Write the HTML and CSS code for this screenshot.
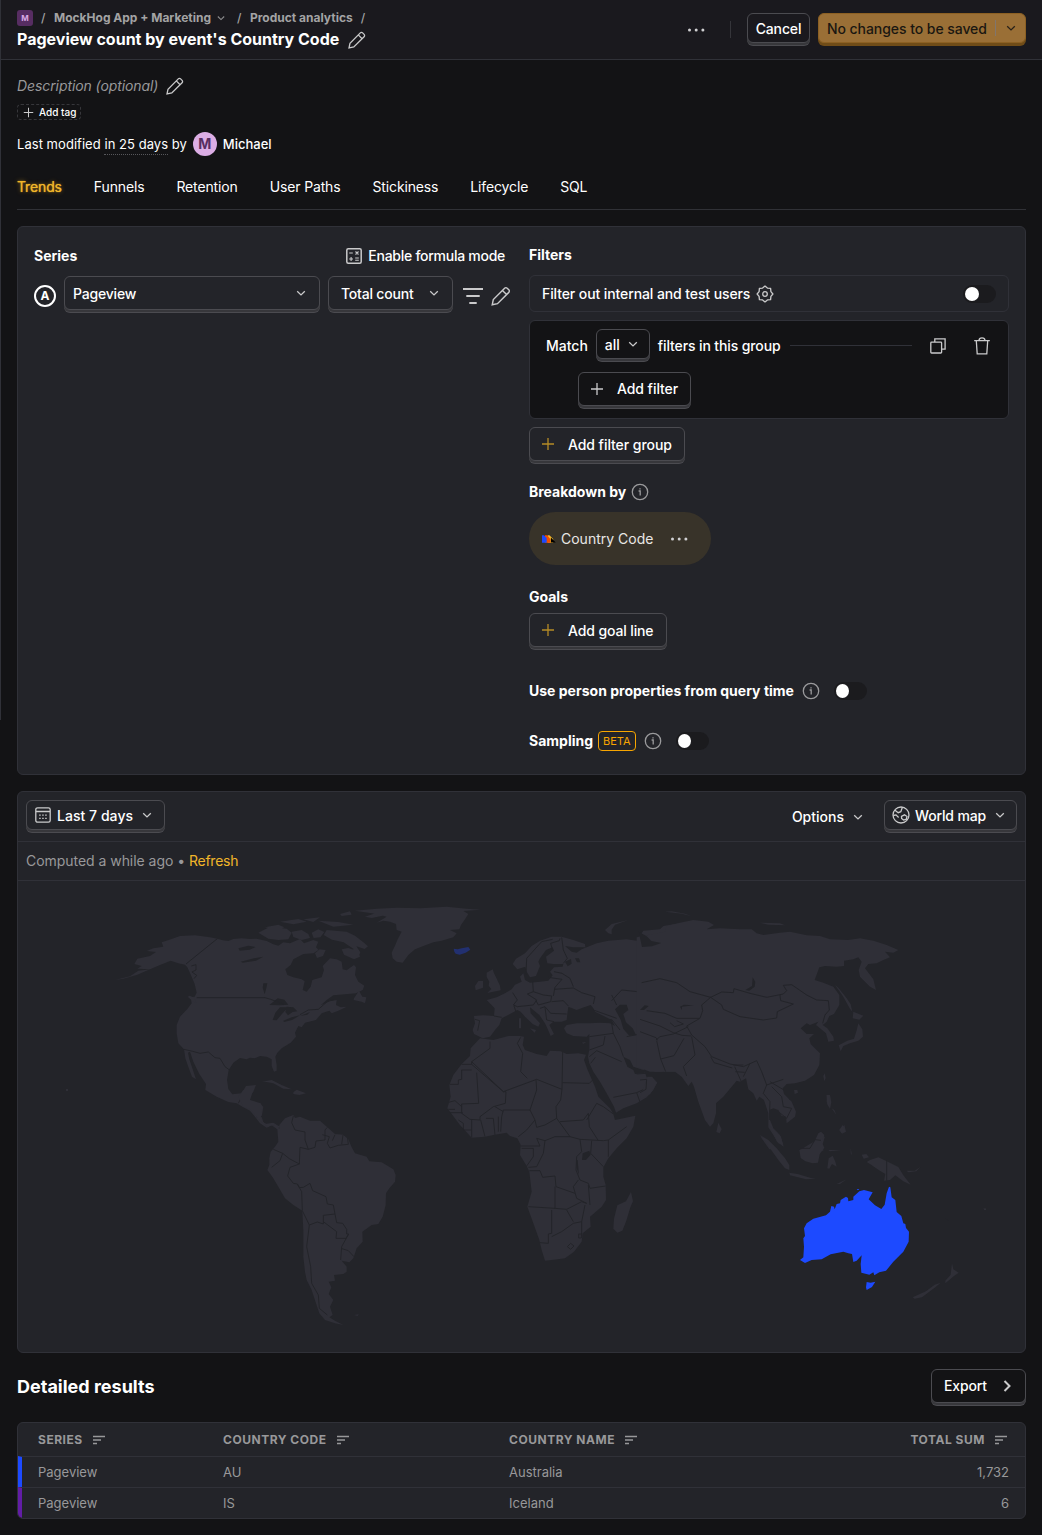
FILE: index.html
```html
<!DOCTYPE html>
<html lang="en">
<head>
<meta charset="utf-8">
<title>Pageview count by event's Country Code</title>
<link rel="stylesheet" href="styles.css">
</head>
<body>
<svg class="defs" width="0" height="0">
  <symbol id="pencil" viewBox="0 0 20 20"><path d="M2 18l1-4.800L13.300 2.900a1.600 1.600 0 0 1 2.300 0l1.500 1.500a1.600 1.600 0 0 1 0 2.300L6.800 17 2 18zM11.300 4.900l3.800 3.800"/></symbol>
  <symbol id="chev" viewBox="0 0 12 12"><path d="M2.200 4.200L6 7.900l3.800-3.700"/></symbol>
  <symbol id="plus" viewBox="0 0 14 14"><path d="M7 1v12M1 7h12"/></symbol>
  <symbol id="info" viewBox="0 0 18 18"><circle cx="9" cy="9" r="7.700"/><path d="M7.600 8h1.600v4.500M9 5.200v1.300"/></symbol>
  <symbol id="dots" viewBox="0 0 20 6"><circle cx="3.500" cy="3" r="1.500"/><circle cx="10.200" cy="3" r="1.500"/><circle cx="16.900" cy="3" r="1.500"/></symbol>
  <symbol id="sort" viewBox="0 0 14 10"><path d="M1 1.500h12M1 5h8M1 8.500h4"/></symbol>
</svg>

<header class="top">
  <div class="top-left">
    <nav class="crumbs">
      <span class="org">M</span><span class="sl s1">/</span><span>MockHog App + Marketing</span><svg class="ic crumb-chev"><use href="#chev"/></svg><span class="sl s2">/</span><span>Product analytics</span><span class="sl s3">/</span>
    </nav>
    <div class="title-row"><h1>Pageview count by event's Country Code</h1><svg class="ic pencil"><use href="#pencil"/></svg></div>
  </div>
  <div class="top-actions">
    <svg class="dots"><use href="#dots"/></svg>
    <i class="vline"></i>
    <button class="btn small cancel"><span>Cancel</span></button>
    <button class="btn small save"><span>No changes to be saved</span><i></i><svg class="ic chev"><use href="#chev"/></svg></button>
  </div>
</header>

<main>
  <div class="desc"><em>Description (optional)</em><svg class="ic pencil"><use href="#pencil"/></svg></div>
  <div class="tag"><svg class="ic"><use href="#plus"/></svg><span>Add tag</span></div>
  <div class="modified"><span>Last modified <u>in 25 days</u> by</span><b>M</b><strong>Michael</strong></div>
  <nav class="tabs"><a class="on">Trends</a><a>Funnels</a><a>Retention</a><a>User Paths</a><a>Stickiness</a><a>Lifecycle</a><a>SQL</a></nav>

  <section class="card editor">
    <div class="series">
      <div class="series-head">
        <h4>Series</h4>
        <div class="formula">
          <svg class="ic" viewBox="0 0 16 16"><rect x=".8" y=".8" width="14.400" height="14.400" rx="1.500" stroke-width="1.500"/><path d="M3.200 5h3.600M9.500 3.500l3 3M12.500 3.500l-3 3M3.200 11h3.800M5.100 9.100v3.800M9.200 10h3.600M9.200 12.300h3.600"/></svg>
          <span>Enable formula mode</span>
        </div>
      </div>
      <div class="series-row">
        <span class="letter">A</span>
        <button class="btn event"><span>Pageview</span><svg class="ic chev"><use href="#chev"/></svg></button>
        <button class="btn math"><span>Total count</span><svg class="ic chev"><use href="#chev"/></svg></button>
        <svg class="ic funnel" viewBox="0 0 20 16"><path d="M0 1h20M3.300 8h13.400M6.300 15h7.400"/></svg>
        <svg class="ic pencil big"><use href="#pencil"/></svg>
      </div>
    </div>
    <div class="filters">
      <h4 class="h-filters">Filters</h4>
      <div class="internal">
        <span>Filter out internal and test users</span>
        <svg class="ic gear" viewBox="0 0 18 18"><path d="M16.900 9L14.900 11.400 14.600 14.600 11.400 14.900 9 16.900 6.600 14.900 3.400 14.600 3.100 11.400 1.100 9 3.100 6.600 3.400 3.400 6.600 3.100 9 1.100 11.400 3.100 14.600 3.400 14.900 6.600z" stroke-linejoin="round"/><circle cx="9" cy="9" r="2.300"/></svg>
        <i class="switch"></i>
      </div>
      <div class="group">
        <div class="match">
          <span>Match</span>
          <button class="btn small all"><span>all</span><svg class="ic chev"><use href="#chev"/></svg></button>
          <span class="tight">filters in this group</span>
          <hr>
          <svg class="ic copy" viewBox="0 0 16 16"><rect x=".8" y="4.200" width="10.800" height="10.800" rx=".8"/><path d="M4.800 4V.9h10.300v10.300h-3.300"/></svg>
          <svg class="ic trash" viewBox="0 0 16 18"><path d="M.2 3.600h15.600M2.300 3.800l.9 13h9.600l.9-13M5 3.400C5.200 0 10.800 0 11 3.400"/></svg>
        </div>
        <button class="btn add-filter"><svg class="ic plus"><use href="#plus"/></svg><span>Add filter</span></button>
      </div>
      <button class="btn add-group"><svg class="ic plus gold"><use href="#plus"/></svg><span>Add filter group</span></button>
      <div class="label-row breakdown"><h4>Breakdown by</h4><svg class="ic info"><use href="#info"/></svg></div>
      <div class="pill">
        <svg class="hog" viewBox="0 0 15 8"><path fill="#f9bd2b" d="M6 0h2l4 4v4H6z"/><path fill="#f54e00" d="M3 0h2.500L9 4v4H3z"/><path fill="#1d4aff" d="M0 0h2l3 3v5H0z"/><path fill="#000" d="M9.500 2.500l5.200 5.200H9.500z"/></svg>
        <span>Country Code</span>
        <svg class="dots"><use href="#dots"/></svg>
      </div>
      <h4 class="h-goals">Goals</h4>
      <button class="btn add-goal"><svg class="ic plus gold"><use href="#plus"/></svg><span>Add goal line</span></button>
      <div class="label-row person"><h4>Use person properties from query time</h4><svg class="ic info"><use href="#info"/></svg><i class="switch"></i></div>
      <div class="label-row sampling"><h4>Sampling</h4><span class="beta">BETA</span><svg class="ic info"><use href="#info"/></svg><i class="switch"></i></div>
    </div>
  </section>

  <section class="card insight">
    <div class="toolbar">
      <button class="btn small range">
        <svg class="ic" viewBox="0 0 16 16"><rect x=".8" y=".8" width="14.400" height="14.400" rx="1.800"/><path d="M1 4.500h14"/><path stroke-dasharray="1.500 1.500" d="M4.200 8.200h8M4.200 11.400h8"/></svg>
        <span>Last 7 days</span><svg class="ic chev"><use href="#chev"/></svg>
      </button>
      <div class="options"><span>Options</span><svg class="ic chev"><use href="#chev"/></svg></div>
      <button class="btn small world">
        <svg class="ic" viewBox="0 0 18 18"><circle cx="9" cy="9" r="8"/><path d="M3 4.300l3.200 2.400 2.600-1L10.300 1.500M1.300 9.500l2.700-.6 2.600 2.600M9.500 10.300l3-1.500 2.500 1.700-.6 2.700-2.800.9-2-1.600z"/></svg>
        <span>World map</span><svg class="ic chev"><use href="#chev"/></svg>
      </button>
    </div>
    <div class="computed">Computed a while ago • <a>Refresh</a></div>
    <svg class="map" viewBox="18 881 1007 471">
      <!-- North America and Greenland -->
      <g transform="translate(100 890) scale(.33333)">
        <path class="land" d="M185 157L215 147 240 138 285 136 330 142 352 146 368 151 385 153 400 147 425 145 450 147 470 146 500 153 520 163 535 167 550 157 570 160 600 147 612 160 640 150 655 155 648 172 656 180 640 190 610 192 580 208 572 225 556 238 562 255 580 262 605 268 614 274 608 300 620 305 632 290 637 270 665 262 672 240 668 228 690 205 710 208 725 215 728 238 740 241 762 225 768 232 765 255 775 275 793 287 788 300 768 310 735 313 700 316 680 330 662 346 690 334 710 330 708 345 722 352 740 350 715 362 695 370 688 362 665 370 648 390 615 398 605 412 595 408 585 428 588 440 572 458 545 475 532 488 526 500 530 525 530 542 522 545 515 528 515 508 500 500 480 498 465 505 450 503 440 508 420 504 400 518 386 540 381 570 385 597 397 613 425 610 438 588 468 585 460 605 448 620 442 640 478 640 490 650 485 680 490 697 507 706 522 700 540 710 532 718 515 706 500 713 480 700 465 680 450 662 430 652 410 640 385 636 350 620 316 600 318 582 298 552 280 515 270 485 264 488 268 508 288 568 276 560 264 528 256 505 252 478 235 460 230 430 230 405 240 380 262 357 275 340 272 322 284 320 290 308 284 282 274 258 262 232 255 224 235 220 212 212 180 225 150 238 112 236 125 228 103 222 112 206 150 198 168 186 140 183 160 175 190 170z"/>
        <path class="land" d="M115 242L150 238 112 254 70 266 45 270 90 259zM285 290l-8-12M263 320l18 16 8 3-6-16-14-6zM475 128L510 110 560 116 575 128 565 148 535 150 505 146zM495 112l40-8 18 8-20 8zM575 125l30-5 20 12 5 12-25 6-25-9zM635 128l20-10 18 8-12 16-20 2zM655 92l60 4 45 8-60 6zM680 120l60 5 25 12 25 20 14 12-10 8-25-8 12 18-5 12-35 0 20-22-30-20-35-8-25-14zM720 72l30-8 5 10-30 4zM540 95l55-8 25 8-40 8zM610 88l50-6-20 14zM725 178l20-4 30 10 5 16-18 8-30-14zM645 190l14-12 18 2-8 18-18 6zM762 325l15-23 10 18 12 2-4 18-10-5-24-5z"/>
        <path class="land" d="M765 62L830 56 890 53 960 55 1040 50 1100 56 1142 59 1090 63 1105 72 1095 88 1083 105 1078 118 1050 120 1070 130 1060 142 1025 152 1000 157 970 168 945 178 925 195 908 218 890 215 878 205 875 188 886 165 892 150 905 125 890 120 888 102 870 95 850 92 830 98 860 80 830 72zM795 80l35-12 25 8-40 8z"/>
        <path class="land" d="M485 575L515 570 545 585 575 598 550 596 520 580 495 575zM580 607l10-8 28 11-20 5-18-3zM540 613l15 1zM627 612l10 1z"/>
        <path class="sea" d="M415 175l30-8 22 4-18 8-30 3zM422 215l40-10 28-5-22 12-40 6zM490 280h12l-3 15-5 18-6-20zM508 345l25-20 20 4 12 15-25 2zM518 390l8-22 14-16 24 0-20 22-14 17zM560 350l20 2 12 12-14 2-14 10-8-10zM550 392l25-10 25-6-24 14-24 6zM600 378l30-12-8 8z"/>
        <path class="border" d="M352 146L258 222M274 228l14-4v16l-12 6 14 10-8 10M290 323H495L512 328 550 342M600 374L625 360 655 358 685 332 700 330M252 478L278 484 300 490 325 486 345 503 360 505 375 530 390 541M415 640l6-12 20-12 6 12-8 18M430 640l25 18 25-15M470 680h16"/>
        <path class="iceland" d="M1061 176l12 2 12-3 20-4 6 8-14 9-18 6-12-3-4-6z"/>
      </g>
      <!-- South America -->
      <g transform="translate(240 1090) scale(.33333)">
        <path class="land" d="M-5 20L10 0 40 0 30 30 62 40 67 50 62 85 75 102 100 98 112 108 118 118 118 105 135 85 160 75 165 84 180 80 210 92 240 92 262 112 285 132 310 134 325 148 335 172 345 190 380 200 388 214 425 217 460 238 467 255 465 275 448 295 438 310 437 345 428 380 415 402 395 405 367 425 368 455 350 475 340 505 328 517 305 512 320 530 320 545 310 552 282 555 285 572 266 575 274 592 266 612 280 630 270 650 278 675 268 682 285 692 310 705 285 700 255 690 238 670 228 640 215 600 200 570 195 545 190 500 190 420 187 362 160 345 135 325 115 290 98 262 82 240 88 225 88 205 92 185 105 170 115 155 112 118 100 105 82 110 60 92 45 75 30 58 10 50z"/>
        <path class="land" d="M342 675l14-2-3 5z"/>
        <path class="border" d="M160 78L155 98 165 120 195 126 195 150 205 178 225 172 228 153 255 150 255 120 262 112M247 134L268 140 262 160 270 174 295 166 325 163 322 140 310 134M277 152L285 134M305 163l4-28M205 178L180 172 178 222 148 206 128 190 100 178M128 190L120 212 95 232M178 222L150 232 143 258 160 280 172 282 178 293 190 292 210 280 218 302 258 320 262 342 280 345 285 372M172 282L185 305 187 362 208 405 232 396 250 402 250 376 285 372 290 398 308 400 320 418 320 432 326 432 305 470 302 510M250 395L290 425 288 445 318 445 326 432M303 475L325 482 342 500M208 405L200 470 212 530 215 580 235 615 238 655 262 675"/>
      </g>
      <!-- Europe, Africa and the Middle East -->
      <g transform="translate(430 890) scale(.33333)">
        <path class="land" d="M248 222L258 206 285 190 305 168 330 152 365 140 395 140 430 150 465 162 466 172 430 172 405 168 425 185 440 188 455 178 500 160 535 152 590 148 620 152 640 122 690 118 700 108 760 98V560L740 545 700 545 675 546 650 530 640 540 610 530 600 510 580 500 592 530 610 540 615 552 645 548 650 562 680 578 670 600 650 622 620 640 580 655 558 668 552 650 530 610 510 575 490 545 478 520 474 500 478 478 478 455 478 432 470 440 430 438 410 430 402 415 410 405 440 400 480 400 510 398 540 400 555 408 545 390 515 375 495 365 490 355 482 345 462 352 440 360 415 350 412 372 410 390 395 395 380 395 370 395 358 405 372 432 362 438 352 415 345 400 328 375 300 352 302 370 330 400 325 410 308 402 285 380 272 365 262 360 240 372 215 385 208 405 195 420 180 440 158 445 132 432 128 420 135 400 132 378 160 376 192 378 194 355 170 330 200 322 225 310 245 298 255 284 275 275 270 260 280 250 285 270 300 278 330 275 355 272 368 256 360 245 372 232 398 230 400 222 370 222 352 220 348 200 372 182 368 172 348 180 330 205 325 215 330 228 318 258 300 262 290 245 286 230 262 238z"/>
        <path class="land" d="M170 248l18-10 4 12 6 12 12 25 2 14-40 8 12-12-8-10 2-12-8-14zM135 288l10-15 14 0 0 20-22 8zM535 130l-10-10 20-18 50-12-40 14-10 15 0 14zM705 66l40 4zM267 385h6v30h-6zM300 415l18 5-4 8zM370 455l26 0M455 458l14-3-8 6z"/>
        <path class="land" d="M150 445L190 450 235 438 268 438 282 440 278 465 285 480 320 492 350 498 360 482 392 484 410 492 445 490 468 494 462 510 472 538 495 590 505 620 540 655 550 672 555 690 616 677 610 710 590 745 560 775 535 805 520 832 520 860 527 885 528 930 515 950 480 980 482 1010 458 1030 455 1055 432 1085 405 1105 365 1110 345 1112 335 1080 328 1050 310 1000 292 950 305 905 298 845 290 828 270 795 272 765 262 745 240 738 230 728 190 735 165 740 125 743 90 705 65 672 52 655 62 620 58 585 70 555 95 522 120 498 122 475z"/>
        <path class="land" d="M603 906l6 28-8 18-12 40-12 30-15 6-12-12 2-30 10-40 26-12z"/>
        <path class="sea" d="M555 358l15-14 20 0 5 16-15 12 8 25 20 18 10 20-20 2-18-20-8-28zM635 362l12-12 10 4-12 14zM458 790l20-8 4 12-14 16-12 0zM405 215l18-8 2 14-12 8zM435 205l12 0 4 12-10 0zM650 135l20 10 0 22-14-10zM438 810h5l4 45-7-20z"/>
        <path class="border" d="M288 255L290 205 335 155 368 148M368 182L362 160 388 152 390 145M395 142L400 180 412 205 400 220M372 245L396 250 420 265 430 290M355 262L396 268 375 292 370 318M372 298L430 294 455 308 495 320 490 342M248 308L262 330 250 345 262 350 310 345 320 330 292 312 310 305 308 275M310 305L340 315 365 318 362 335 325 345 318 332M365 335L400 332 415 348M330 355L345 350 362 370 410 372M345 352L350 390 372 395M252 348L258 365M192 378L215 382M135 388l14 4-6 30M490 360L560 385M520 395L545 388 570 420M545 400L550 430 478 440M545 332L575 300 632 306 640 278 695 265 720 275 760 280M545 315L560 345M590 440L650 428 680 450 745 430M622 365L640 360 690 385 750 390M625 370v25l75 30 50 15M550 430L570 470 580 500M678 450L690 490 705 520 700 545M705 508L750 508M478 480L520 465 525 438M478 500L500 482 575 515M482 520l14-18M550 622L620 608 648 595 650 570M620 608l10 28M620 552l28-2"/>
        <path class="border" d="M180 455V475L125 515 220 605 320 568 396 598 398 486M398 578L478 580 490 568M272 442L262 460 278 490 272 545 292 565M95 523H125V515M60 583L85 583 85 570 95 568 95 540 125 540M125 523L220 605 228 605 226 640 190 650 150 680 150 690 120 688 95 670 95 642 146 640 140 548M52 638L75 632 95 650M55 658H75M60 668L98 668M85 690l15 10 0 20 25 0M125 688L125 742M152 690L165 740M168 685H190L195 735M205 680V725M212 725L215 680 220 660 300 660 320 600 318 568M195 650L220 665M300 660L315 690 290 720 265 740M315 690L320 712 345 705 380 685 378 650 392 630 396 598M380 685L420 740 450 748 520 752 535 750 590 710M390 695L460 690 475 670 478 710 505 752M470 690L500 640 520 650 550 672M272 768H330L320 745 345 752 375 740 420 740M275 775h35v25l-20 28M345 752L340 790 320 830 295 832M298 842H330L338 862 375 858 378 890 435 910M450 748L455 785 440 800 438 840 450 870 475 880 480 895 527 888M482 790L520 830M485 752L482 790M535 750V800M295 950L375 955 375 890M375 955L410 958 455 935 470 940 440 925 430 890 445 870M475 885L480 945M365 960V1030L355 1032 355 1060 330 1058M365 1040L395 1025 430 1000 455 995 455 1040M410 960L430 995M465 945L455 995M412 1070l10-10 10 8-10 10zM446 1032l8 0 0 12-8 0z"/>
      </g>
      <!-- Asia -->
      <g transform="translate(640 890) scale(.33333)">
        <path class="land" d="M-10 142L40 132 75 125 80 108 120 98 160 90 205 95 222 105 200 118 240 115 300 118 335 118 350 130 370 135 420 128 450 125 500 136 540 138 570 148 625 150 660 145 700 152 740 165 775 180 760 188 735 185 750 202 730 210 710 220 685 222 675 235 700 268 708 300 690 290 660 260 656 240 665 215 655 202 640 208 612 212 612 228 590 230 555 228 538 232 524 270 550 278 580 290 598 315 598 345 582 372 568 378 560 395 548 405 562 415 580 440 582 452 565 455 558 430 540 415 528 405 535 395 510 405 500 400 482 415 500 432 522 432 508 445 512 462 530 480 540 490 538 525 522 555 495 572 465 580 440 582 428 595 432 612 455 635 468 665 465 680 440 700 438 680 425 678 415 660 400 655 388 660 390 690 400 715 420 735 430 765 415 760 400 735 385 712 385 670 372 630 358 620 350 632 340 610 325 598 318 565 300 575 290 572 275 590 250 620 228 640 228 670 220 700 210 710 195 690 175 635 162 590 155 575 145 588 125 560 105 545 60 545 30 545 -10 530z"/>
        <path class="land" d="M585 285l10 8 25 32 12 18 5 22-8-10-20-36zM640 365l30 12-12 12-20-4zM655 400l12 18 2 22-14 12-25 8-20 8-8 16-6-18 26-14 20-6 8-25zM550 558l4-8 3 14-4 10zM560 615l10 0 4 22-4 20-8-16zM598 720l15-15 5 20-12 6zM580 670l6 14M590 690l15 0M235 698l10 20-6 12-10-4zM462 600l10 0 2 8-10 4zM360 738l22 16 26 24-20 0zM480 780l50-30 16-20 8 12-6 20 2 20zM75 65l50 6 30 8-20-8-40-7zM360 98l60 2 15 6-50-2zM0 628l30-15 22-35-16-18-14 0z"/>
        <path class="sea" d="M338 262l8 14-2 14-16 12-12-2 20-12zM120 350l12-6 30 2-36 4 0 10zM0 360l14-14 12 2-14 12zM-4 125l24 14 14 14 30 6-28 10-30 2z"/>
        <path class="border" d="M5 278L60 266 110 278 150 305 212 322 245 306 280 308 282 296 330 310 380 322 430 312 440 302 430 286 455 284 500 315 530 330 565 332 568 360 555 375 548 400M212 322L245 345 250 358 300 380 370 390 410 384 412 365 460 342 422 332 420 315M212 322L185 345 188 362 180 385 110 385 75 370 20 362M180 385L140 408 155 435 195 470 215 500 270 522 310 530 350 512 365 545 380 585 430 568M48 450L60 440 100 432 145 410M0 388l60 20 40 20 26 8 28 2M50 452l12 55 40-10 30-52M62 507l15 38M155 440l10 55-35 35 10 28M0 425l48 18 5 8M90 398l14 12 26-8-20-10M212 500l10 18 55 16M280 525l30 0M284 530l20 45M286 545l28 2M310 560l20-40M380 585L370 610 390 635 388 690M395 590L425 620 430 650 455 655 440 685 415 665M390 575l50 30 10 25M0 570l20-2-2 30-18 10"/>
      </g>
      <!-- South-east Asia and Oceania -->
      <g transform="translate(690 1080) scale(.33333)">
        <path class="land" d="M210 165L235 180 260 205 285 235 298 255 298 270 285 265 265 240 240 205zM235 135l18 15 20 20 8 30-20-15-14-30zM298 278l25 4 40 12 15 2-30 2-48-12zM328 210l18-5 25-15 14-30 8-5 10 10-8 20 8 18-14 20-5 25-16 2-22-6-14-10zM412 265l4-30 12-8 8 18 4 15-14-8-8 14zM415 210l40 0-35 4zM440 312l30-14-20 14zM412 310l-14-6zM482 204l4 22-4-6zM515 224l14-2 8 10-16 4zM540 240l25-8 30 14 30 15 15 25 22 28-22-10-24-18-16 14-18 2 4-20-20-12-26-18-10-6zM650 272l25 0 16-12-12 14-24 3zM765 412l14 16-12-14zM786 550l4 18 16 10-14 10-26 22 0-8 16-18zM752 608l-16 14-40 30-22 4-6-4 40-18 26-20zM878 386l8-2 2 3zM410 45l8 0 2 25-5 10-5-15zM425 85l8 5 6 15M437 105l10 5M448 150l10-15 8 20-10 5z"/>
        <path class="border" d="M590 243V302M332 205l28 0 15-26 18 2"/>
        <path class="hot" d="M330 540L340 532 342 500 340 475 345 468 342 445 350 430 370 416 408 406 420 395 424 378 432 380 434 388 440 372 450 370 452 360 468 350 474 354 475 364 490 360 490 350 508 334 522 330 548 337 536 358 555 376 574 387 584 374 590 340 597 320 601 322 605 352 616 360 620 396 634 408 640 430 646 432 648 444 657 455 656 485 640 515 610 545 588 572 568 577 553 586 550 577 538 584 514 578 512 552 515 526 500 542 490 546 486 522 475 520 460 515 422 523 395 538 365 540 345 549zM530 606l12 2 14-3-10 16-16 9-2-8zM500 327l8 0-4 4z"/>
      </g>
      <path class="land" d="M66 1089h2v2h-2zM984 1209h2v1h-2z"/>
    </svg>
  </section>

  <div class="results-head"><h2>Detailed results</h2><button class="btn export"><span>Export</span><svg class="ic" viewBox="0 0 12 14"><path d="M3.500 2l5 5-5 5"/></svg></button></div>

  <section class="card table">
    <div class="row head"><span>SERIES<svg class="ic sort"><use href="#sort"/></svg></span><span>COUNTRY CODE<svg class="ic sort"><use href="#sort"/></svg></span><span>COUNTRY NAME<svg class="ic sort"><use href="#sort"/></svg></span><span class="num">TOTAL SUM<svg class="ic sort"><use href="#sort"/></svg></span></div>
    <div class="row blue"><span>Pageview</span><span>AU</span><span>Australia</span><span class="num">1,732</span></div>
    <div class="row purple"><span>Pageview</span><span>IS</span><span>Iceland</span><span class="num">6</span></div>
  </section>
</main>
<i class="side-edge"></i>
</body>
</html>
```

FILE: styles.css
```css
* { box-sizing: border-box; }
body {
  margin: 0;
  height: 1535px;
  overflow: hidden;
  background: #131315;
  color: #fff;
  font: 14px/20px Inter, "Liberation Sans", sans-serif;
}
h1, h2, h4 { margin: 0; font-weight: 700; }
h4 { font-size: 14px; line-height: 20px; }
span, h1, h2, h4, a { white-space: nowrap; }
svg { display: block; flex: none; }
.defs { position: absolute; }
.ic { fill: none; stroke: #cacacb; stroke-width: 1.3; }
.dots { width: 20px; height: 6px; fill: #d0d0d2; }
.pencil { width: 20px; height: 20px; }
.chev { width: 12px; height: 12px; }
.plus { width: 14px; height: 14px; }
.gold { stroke: #b58b26; }
.info { width: 18px; height: 18px; stroke: #9a9a9c; }
.side-edge { position: absolute; left: 0; top: 0; width: 1px; height: 720px; background: #303138; }

/* buttons with a raised lower edge */
.btn {
  display: flex;
  align-items: center;
  flex: none;
  height: 34px;
  margin: 0 0 3px;
  padding: 0;
  border: 1px solid #4b4b50;
  border-radius: 6px;
  background: #232429;
  box-shadow: 0 2px 0 #37373b, 0 3px 0 #4b4b50;
  color: #fff;
  font: 500 14px/20px Inter, "Liberation Sans", sans-serif;
  letter-spacing: -.06px;
}
.btn.small { height: 30px; }
.btn span { padding-top: 2px; }

/* header */
.top {
  display: flex;
  justify-content: space-between;
  height: 60px;
  padding: 0 16px 0 17px;
  border-bottom: 1px solid #303138;
  background: #1a191e;
}
.crumbs {
  display: flex;
  align-items: center;
  height: 16px;
  margin-top: 10px;
  color: #a3a3a4;
  font-size: 12px;
  font-weight: 700;
  line-height: 16px;
}
.org {
  width: 16px;
  height: 16px;
  border-radius: 3px;
  background: #572d62;
  color: #d9a9e3;
  font-size: 8px;
  text-align: center;
}
.sl { font-weight: 500; }
.s1 { width: 5px; margin: 0 8px; }
.s2 { width: 5px; margin: 0 8px 0 11px; }
.s3 { margin-left: 8px; }
.crumb-chev { width: 10px; height: 10px; margin-left: 5px; stroke: #8d8d8f; }
.title-row { display: flex; align-items: center; height: 26px; gap: 8px; }
.title-row .pencil { margin-top: 2px; }
h1 { font-size: 16px; line-height: 24px; }
.top-actions { display: flex; align-items: flex-start; padding-top: 13px; }
.top-actions .dots { margin: 14px 24px 0 0; }
.vline { width: 1px; height: 17px; margin: 8px 16px 0 0; background: #35353a; }
.cancel { justify-content: center; width: 63px; margin-right: 8px; background: #1a191e; letter-spacing: -.15px; }
.save {
  width: 208px;
  padding-left: 8px;
  border-color: #8c6023;
  background: #9a6f36;
  box-shadow: 0 3px 0 #704c18;
  color: #1a1711;
}
.save i { width: 1px; height: 16px; margin: 0 9px 0 8px; background: #81766d; }
.save .ic { stroke: #282119; }

main { padding: 0 16px 0 17px; }
.desc { display: flex; align-items: center; gap: 7px; height: 20px; margin-top: 16px; color: #98989a; letter-spacing: -.09px; }
.tag {
  display: flex;
  align-items: center;
  width: 64px;
  height: 16px;
  margin-top: 8px;
  padding-left: 5px;
  gap: 5px;
  border: 1px dashed #37373b;
  border-radius: 4px;
  font-size: 10px;
  font-weight: 500;
}
.tag .ic { width: 11px; height: 11px; }
.modified { display: flex; align-items: center; height: 24px; margin-top: 12px; font-size: 13px; }
.modified span { letter-spacing: .04px; }
.modified u { text-decoration: none; border-bottom: 1px dotted #57575b; padding-bottom: 2px; }
.modified b { width: 24px; height: 24px; margin: 0 6px; border-radius: 50%; background: #dcaee5; color: #572d62; font-size: 14px; line-height: 24px; text-align: center; }
.modified strong { font-weight: 500; }
.tabs { display: flex; gap: 32px; height: 54px; padding-top: 21px; border-bottom: 1px solid #303136; letter-spacing: -.14px; }
.on { color: #f1b629; text-shadow: 0 0 1px #f1b629, 0 0 4px #8c681d; }

.card { overflow: hidden; border: 1px solid #303138; border-radius: 6px; background: #232429; }
.editor { display: flex; height: 549px; margin-top: 16px; padding: 0 16px; }
.series { width: 479px; margin-right: 16px; padding-top: 19px; }
.series-head { display: flex; justify-content: space-between; height: 30px; padding-right: 8px; }
.formula { display: flex; gap: 6px; font-weight: 500; letter-spacing: -.27px; }
.formula .ic { width: 16px; height: 16px; margin-top: 2px; stroke-width: 1.1; }
.series-row { display: flex; align-items: flex-start; }
.letter { width: 22px; height: 22px; margin: 9px 8px 0 0; border: 2px solid #fff; border-radius: 50%; font-size: 12px; font-weight: 700; line-height: 18px; text-align: center; }
.event { justify-content: space-between; width: 256px; padding: 0 12px 0 8px; margin-right: 8px; letter-spacing: -.2px; }
.math { width: 125px; padding: 0 12px; justify-content: space-between; letter-spacing: -.2px; }
.funnel { width: 20px; height: 16px; margin: 12px 7px 0 10px; stroke-width: 1.9; }
.pencil.big { width: 22px; height: 22px; margin-top: 9px; }
.filters { width: 480px; }
.h-filters { margin: 18px 0 10px; }
.internal { display: flex; align-items: center; height: 37px; padding: 0 12px; border: 1px solid #303138; border-radius: 6px; font-weight: 500; letter-spacing: -.1px; }
.gear { width: 18px; height: 18px; margin-left: 6px; }
.internal .switch { margin-left: auto; }
.switch { display: block; width: 33px; height: 18px; padding: 2px; border-radius: 9px; background: #1b1b1e; }
.switch::before { content: ""; display: block; width: 14px; height: 14px; border-radius: 50%; background: #fff; }
.label-row .switch::before { width: 13px; }
.group { height: 99px; margin: 8px 0; padding: 8px 16px; border: 1px solid #303138; border-radius: 6px; background: #131315; }
.group .btn { background: #131315; }
.match { display: flex; align-items: center; height: 33px; gap: 8px; font-weight: 500; }
.tight { letter-spacing: -.12px; }
.all { width: 54px; padding: 0 10px 0 8px; justify-content: space-between; }
hr { flex: 1; height: 1px; margin: 0 10px 0 1px; border: 0; background: #303138; }
.copy { width: 16px; height: 16px; }
.trash { width: 16px; height: 18px; margin: 0 2px 0 20px; }
.add-filter { width: 113px; margin: 10px 0 0 32px; padding-left: 11px; gap: 13px; }
.add-filter span, .export span { padding-top: 0; }
.add-group { width: 156px; padding-left: 11px; gap: 13px; }
.label-row { display: flex; align-items: center; height: 20px; }
.breakdown { margin: 21px 0 10px; gap: 5px; }
.pill { display: flex; align-items: center; width: 182px; height: 53px; padding-left: 13px; border-radius: 27px; background: #383329; color: #e8e7e5; }
.hog { width: 14px; height: 8px; margin-right: 5px; }
.pill .dots { margin-left: 16px; }
.h-goals { margin: 22px 0 6px; }
.add-goal { width: 138px; padding-left: 11px; gap: 13px; letter-spacing: -.12px; }
.person { margin-top: 34px; }
.person h4 { letter-spacing: .01px; }
.person .info { margin: 0 14px 0 8px; }
.sampling { margin-top: 30px; }
.beta { height: 20px; margin: 0 8px 0 5px; padding: 0 4px; border: 1px solid #f7a501; border-radius: 4px; color: #f7a501; font-size: 11px; line-height: 18px; }
.sampling .info { margin-right: 14px; }

.insight { height: 562px; margin-top: 16px; }
.toolbar { display: flex; align-items: flex-start; height: 50px; padding: 8px; border-bottom: 1px solid #303138; }
.range { width: 139px; padding-left: 8px; letter-spacing: .04px; }
.range .ic:first-child { width: 16px; height: 16px; margin-right: 6px; }
.range .chev { margin-left: 8px; }
.options { display: flex; align-items: center; height: 20px; margin: 7px 20px 0 auto; gap: 8px; font-weight: 500; }
.world { width: 133px; padding-left: 7px; letter-spacing: -.15px; }
.world .ic:first-child { width: 18px; height: 18px; margin-right: 5px; }
.world .chev { margin-left: 8px; }
.computed { height: 39px; padding: 9px 8px; border-bottom: 1px solid #303138; color: #98989a; letter-spacing: -.04px; }
.computed a { color: #f1b629; letter-spacing: -.25px; }
.map { width: 1007px; height: 471px; }
.land { fill: #2f2f37; }
.sea { fill: #232429; }
.border { fill: none; stroke: #232429; stroke-width: 3; stroke-linejoin: round; }
.iceland { fill: #223070; }
.hot { fill: #1d4aff; }

.results-head { display: flex; justify-content: space-between; height: 37px; margin-top: 16px; }
h2 { font-size: 18px; line-height: 35px; }
.export { width: 95px; padding-left: 12px; gap: 14px; background: #131315; letter-spacing: -.15px; }
.export .ic { width: 12px; height: 14px; stroke-width: 2; }
.table { height: 97px; margin-top: 16px; }
.row {
  display: grid;
  grid-template-columns: 185px 286px 1fr auto;
  align-items: center;
  height: 31px;
  padding: 0 16px 0 20px;
  border-top: 1px solid #303138;
  color: #98989a;
  font-size: 13px;
}
.row.head { height: 33px; border: 0; font-size: 12px; font-weight: 700; letter-spacing: .52px; }
.head span { display: flex; align-items: center; gap: 9px; }
.sort { width: 14px; height: 10px; stroke: #98989a; }
.head .num { padding-right: 1px; }
.blue, .purple { padding-left: 16px; border-left: 4px solid #1d4aff; }
.purple { border-left-color: #621da6; }
```
